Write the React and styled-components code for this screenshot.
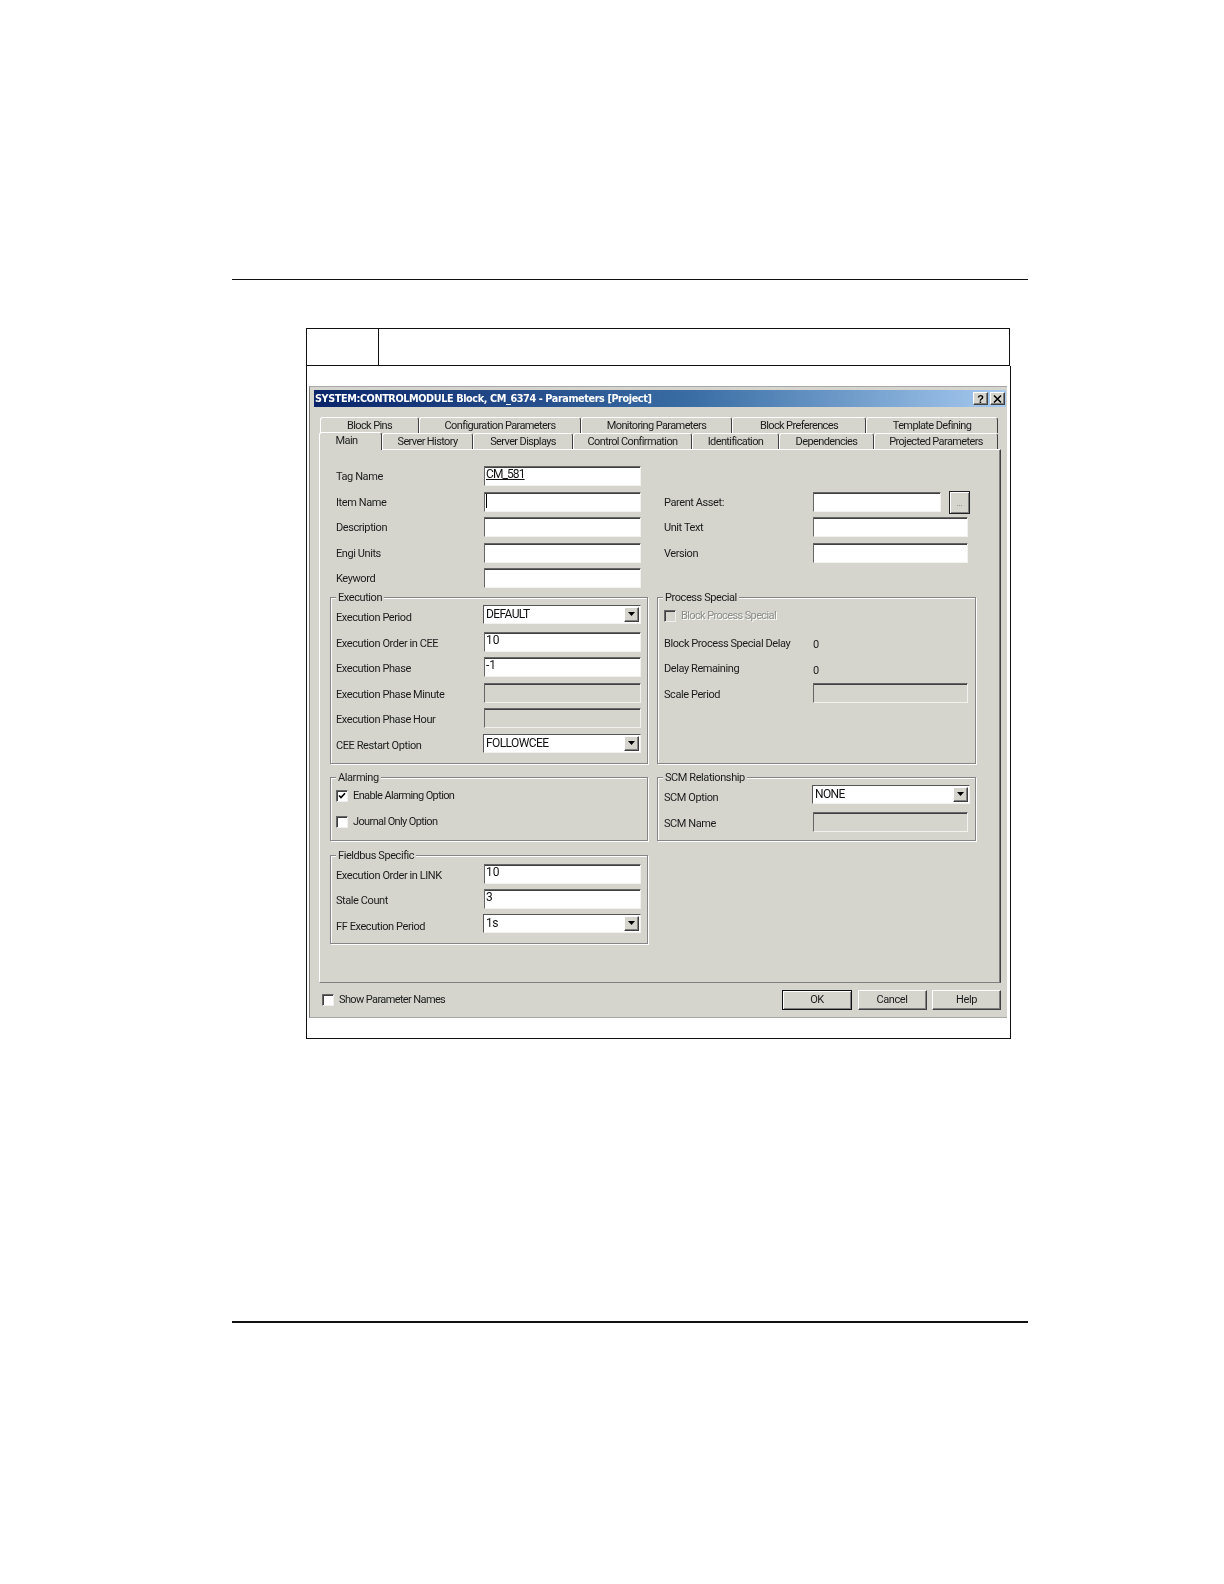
import React from "react";
import styled, { createGlobalStyle, css } from "styled-components";

const GlobalStyle = createGlobalStyle`
  html, body {
    margin: 0;
    padding: 0;
    background: #fff;
  }
`;

const FACE = "#d5d5ce";

const raised = css`
  background: ${FACE};
  border: 1px solid;
  border-color: #fff #404040 #404040 #fff;
  box-shadow: inset -1px -1px 0 #808080;
  box-sizing: border-box;
`;

const Page = styled.div`
  width: 1224px;
  height: 1584px;
  padding: 279px 0 0 232px;
  box-sizing: border-box;
`;
const Rule = styled.div`
  width: 796px;
  height: ${(p) => p.$h || 1}px;
  background: #111;
`;
const Table = styled.div`
  margin: 48px 0 282px 74px;
  width: 705px;
`;
const HeadRow = styled.div`
  display: flex;
  width: 704px;
  height: 38px;
  box-sizing: border-box;
  border: 1px solid #111;
`;
const HeadCell = styled.div`
  width: 71px;
  border-right: 1px solid #111;
`;
const BodyRow = styled.div`
  border: 1px solid #111;
  border-top: 0;
  padding: 20px 3px 20px 2px;
  box-sizing: border-box;
  height: 673px;
`;

const Dialog = styled.div`
  width: 698px;
  height: 632px;
  box-sizing: border-box;
  background: ${FACE};
  padding: 3px 1px 0 4px;
  border-top: 1px solid #a8a8a8;
  border-left: 1px solid #808080;
  border-bottom: 1px solid #a8a8a8;
  font-family: Roboto, "Liberation Sans", sans-serif;
  font-size: 11px;
  letter-spacing: -0.42px;
  color: #1c1c1c;
  filter: blur(0.35px);
`;
const TitleBar = styled.div`
  height: 17px;
  display: flex;
  align-items: center;
  justify-content: space-between;
  padding: 0 1px 0 1px;
  background: linear-gradient(90deg, #0a246a 0%, #3a6ea5 55%, #a6caf0 100%);
`;
const TitleText = styled.span`
  font-family: "DejaVu Sans", sans-serif;
  font-weight: bold;
  font-size: 9.7px;
  letter-spacing: -0.4px;
  color: #fff;
  white-space: nowrap;
`;
const TitleButtons = styled.div`
  display: flex;
  gap: 2px;
`;
const TitleButton = styled.div`
  ${raised}
  width: 15px;
  height: 13px;
  display: flex;
  align-items: center;
  justify-content: center;
  font: bold 11px "Liberation Sans", sans-serif;
  color: #000;
`;
const Content = styled.div`
  padding: 10px 0 0 5px;
`;
const TabRow = styled.div`
  display: flex;
  margin-left: 1px;
  height: 16px;
`;
const Tab = styled.div`
  width: ${(p) => p.$w}px;
  height: 16px;
  box-sizing: border-box;
  background: ${FACE};
  border-top: 1px solid #fff;
  border-left: 1px solid #fff;
  border-right: 1px solid #404040;
  border-radius: 3px 3px 0 0;
  text-align: center;
  line-height: 16px;
  letter-spacing: -0.62px;
  white-space: nowrap;
`;
const ActiveTab = styled(Tab)`
  position: relative;
  margin-left: -1px;
  width: ${(p) => p.$w + 1}px;
  height: 18px;
  margin-top: -1px;
  padding-right: 8px;
  line-height: 15px;
  z-index: 1;
`;
const Panel = styled.div`
  width: 682px;
  height: 534px;
  box-sizing: border-box;
  border: 1px solid;
  border-color: #fff #404040 #808080 #fff;
  box-shadow: inset -1px 0 0 #808080;
  padding: 15px 0 0 10px;
`;
const Columns = styled.div`
  display: grid;
  grid-template-columns: 318px 319px;
  column-gap: 9px;
  row-gap: 13.5px;
`;
const Plain = styled.div`
  padding-left: ${(p) => p.$left}px;
`;
const GroupArea = styled.div`
  margin-top: 4.5px;
`;
const Row = styled.div`
  display: flex;
  height: 25.5px;
`;
const Label = styled.div`
  width: ${(p) => (p.$wide ? 149 : 148)}px;
  margin-left: -1px;
  line-height: 14px;
  padding-top: 5px;
  box-sizing: border-box;
  white-space: nowrap;
`;
const Group = styled.div`
  position: relative;
  box-sizing: border-box;
  border: 1px solid #858585;
  box-shadow: 1px 1px 0 #fff, inset 1px 1px 0 #fff;
  padding: ${(p) => p.$top || 7}px 0 ${(p) => p.$bottom || 4}px ${(p) => p.$left || 6}px;

  ${Label} {
    padding-top: 6px;
  }
`;
const Legend = styled.span`
  position: absolute;
  top: -6px;
  left: 5px;
  padding: 0 2px;
  line-height: 12px;
  background: ${FACE};
`;
const Value = styled.div`
  padding-top: ${(p) => p.$top || 7}px;
  line-height: 14px;
`;
const Input = styled.div`
  width: ${(p) => p.$w || 157}px;
  height: 20px;
  margin-top: 1px;
  box-sizing: border-box;
  background: ${(p) => (p.$disabled ? FACE : "#fff")};
  border: 1px solid;
  border-color: #666 #f2f2ee #f2f2ee #666;
  box-shadow: inset 0 1px 0 #404040;
  padding: 0 0 0 1px;
  font-size: 12px;
  line-height: 14px;
  letter-spacing: -0.1px;
  color: #111;
`;
const Underlined = styled.span`
  text-decoration: underline;
  letter-spacing: -0.9px;
`;
const Caret = styled.div`
  width: 1px;
  height: 14px;
  margin-top: 1px;
  background: #000;
`;
const Combo = styled.div`
  width: 158px;
  height: 19px;
  margin: ${(p) => p.$top || 0}px 0 0 -1px;
  box-sizing: border-box;
  display: flex;
  background: #fff;
  border: 1px solid;
  border-color: #555 #f2f2ee #f2f2ee #555;
  padding: 1px 1px 1px 2px;
  font-size: 12px;
  line-height: 14px;
  letter-spacing: -0.6px;
  color: #111;
`;
const ComboText = styled.div`
  flex: 1;
`;
const ComboArrow = styled.div`
  ${raised}
  width: 15px;
  display: flex;
  align-items: center;
  justify-content: center;
`;
const BrowseButton = styled.div`
  width: 21px;
  height: 23px;
  margin-left: 8px;
  box-sizing: border-box;
  background: ${FACE};
  border: 1px solid #222;
  box-shadow: inset 1px 1px 0 #fff, inset -1px -1px 0 #808080;
  text-align: center;
  line-height: 22px;
  font-size: 9px;
  color: #777;
`;
const CheckRow = styled.div`
  display: flex;
  align-items: center;
  height: 13px;
  margin-left: -1px;
  margin-top: ${(p) => p.$top || 0}px;
  margin-bottom: ${(p) => p.$bottom || 0}px;
  letter-spacing: -0.62px;
  color: ${(p) => (p.$disabled ? "#8c8c88" : "inherit")};
  text-shadow: ${(p) => (p.$disabled ? "1px 1px 0 #fff" : "none")};
`;
const CheckBox = styled.div`
  width: 12px;
  height: 12px;
  margin-right: ${(p) => p.$gap || 5}px;
  flex: none;
  box-sizing: border-box;
  background: ${(p) => (p.$disabled ? FACE : "#fff")};
  border: 1px solid;
  border-color: #666 #eee #eee #666;
  box-shadow: inset 1px 1px 0 #404040;
  display: flex;
  align-items: center;
  justify-content: center;
`;
const Footer = styled.div`
  display: flex;
  align-items: flex-start;
  justify-content: space-between;
  width: 682px;
  padding: 7px 0 0 3px;
  box-sizing: border-box;
`;
const FooterCheck = styled(CheckRow)`
  margin-left: 0;
  margin-top: 3px;
`;
const Buttons = styled.div`
  display: flex;
  gap: 5.5px;
`;
const Button = styled.div`
  ${raised}
  width: ${(p) => p.$w || 69}px;
  height: 20px;
  text-align: center;
  line-height: 18px;
  ${(p) =>
    p.$primary &&
    css`
      border: 1px solid #111;
      box-shadow: inset 1px 1px 0 #fff, inset -1px -1px 0 #808080;
    `}
`;

const topTabs = [
  ["Block Pins", 99],
  ["Configuration Parameters", 162],
  ["Monitoring Parameters", 151],
  ["Block Preferences", 134],
  ["Template Defining", 132],
];
const bottomTabs = [
  ["Server History", 91],
  ["Server Displays", 100],
  ["Control Confirmation", 119],
  ["Identification", 87],
  ["Dependencies", 95],
  ["Projected Parameters", 124],
];

const Arrow = () => (
  <svg width="9" height="5" viewBox="0 0 9 5">
    <path d="M1 0h7L4.5 4z" fill="#000" />
  </svg>
);

const Select = ({ value, top }) => (
  <Combo $top={top}>
    <ComboText>{value}</ComboText>
    <ComboArrow>
      <Arrow />
    </ComboArrow>
  </Combo>
);

const Tick = () => (
  <svg width="8" height="8" viewBox="0 0 8 8">
    <path d="M1 3.5l2 2L7 1.2" fill="none" stroke="#000" strokeWidth="1.6" />
  </svg>
);

const Field = ({ label, children, disabled, right }) => (
  <Row>
    <Label $wide={right}>{label}</Label>
    <Input $disabled={disabled} $w={right ? 155 : undefined}>{children}</Input>
  </Row>
);

const App = () => {
  return (
    <Page>
      <GlobalStyle />
      <Rule />
      <Table>
        <HeadRow>
          <HeadCell />
        </HeadRow>
        <BodyRow>
          <Dialog>
            <TitleBar>
              <TitleText>SYSTEM:CONTROLMODULE Block, CM_6374 - Parameters [Project]</TitleText>
              <TitleButtons>
                <TitleButton>?</TitleButton>
                <TitleButton>
                  <svg width="9" height="8" viewBox="0 0 9 8">
                    <path d="M1 0.5l7 7M8 0.5l-7 7" stroke="#000" strokeWidth="1.5" fill="none" />
                  </svg>
                </TitleButton>
              </TitleButtons>
            </TitleBar>
            <Content>
              <TabRow>
                {topTabs.map(([name, w]) => (
                  <Tab key={name} $w={w}>{name}</Tab>
                ))}
              </TabRow>
              <TabRow>
                <ActiveTab $w={62}>Main</ActiveTab>
                {bottomTabs.map(([name, w]) => (
                  <Tab key={name} $w={w}>{name}</Tab>
                ))}
              </TabRow>
              <Panel>
                <Columns>
                  <Plain $left={7}>
                    <Field label="Tag Name"><Underlined>CM_581</Underlined></Field>
                    <Field label="Item Name"><Caret /></Field>
                    <Field label="Description" />
                    <Field label="Engi Units" />
                    <Field label="Keyword" />
                  </Plain>
                  <Plain $left={8}>
                    <Row />
                    <Row>
                      <Label $wide>Parent Asset:</Label>
                      <Input $w={128} />
                      <BrowseButton>...</BrowseButton>
                    </Row>
                    <Field right label="Unit Text" />
                    <Field right label="Version" />
                  </Plain>
                </Columns>
                <GroupArea>
                  <Columns>
                    <Group $bottom={4.5}>
                      <Legend>Execution</Legend>
                      <Row>
                        <Label>Execution Period</Label>
                        <Select value="DEFAULT" />
                      </Row>
                      <Field label="Execution Order in CEE">10</Field>
                      <Field label="Execution Phase">-1</Field>
                      <Field label="Execution Phase Minute" disabled />
                      <Field label="Execution Phase Hour" disabled />
                      <Row>
                        <Label>CEE Restart Option</Label>
                        <Select value="FOLLOWCEE" top={1.5} />
                      </Row>
                    </Group>
                    <Group $left={7}>
                      <Legend>Process Special</Legend>
                      <Row>
                        <CheckRow $disabled $top={4}>
                          <CheckBox $disabled />
                          Block Process Special
                        </CheckRow>
                      </Row>
                      <Row>
                        <Label $wide>Block Process Special Delay</Label>
                        <Value>0</Value>
                      </Row>
                      <Row>
                        <Label $wide>Delay Remaining</Label>
                        <Value $top={8}>0</Value>
                      </Row>
                      <Field right label="Scale Period" disabled />
                    </Group>
                    <Group $top={11} $bottom={1}>
                      <Legend>Alarming</Legend>
                      <CheckRow $bottom={13}>
                        <CheckBox><Tick /></CheckBox>
                        Enable Alarming Option
                      </CheckRow>
                      <CheckRow $bottom={11}>
                        <CheckBox />
                        Journal Only Option
                      </CheckRow>
                    </Group>
                    <Group $left={7}>
                      <Legend>SCM Relationship</Legend>
                      <Row>
                        <Label $wide>SCM Option</Label>
                        <Select value="NONE" />
                      </Row>
                      <Field right label="SCM Name" disabled />
                    </Group>
                    <Group $top={7} $bottom={4}>
                      <Legend>Fieldbus Specific</Legend>
                      <Field label="Execution Order in LINK">10</Field>
                      <Field label="Stale Count">3</Field>
                      <Row>
                        <Label>FF Execution Period</Label>
                        <Select value="1s" />
                      </Row>
                    </Group>
                  </Columns>
                </GroupArea>
              </Panel>
              <Footer>
                <FooterCheck>
                  <CheckBox />
                  Show Parameter Names
                </FooterCheck>
                <Buttons>
                  <Button $primary $w={70}>OK</Button>
                  <Button>Cancel</Button>
                  <Button>Help</Button>
                </Buttons>
              </Footer>
            </Content>
          </Dialog>
        </BodyRow>
      </Table>
      <Rule $h={2} />
    </Page>
  );
};

export default App;
